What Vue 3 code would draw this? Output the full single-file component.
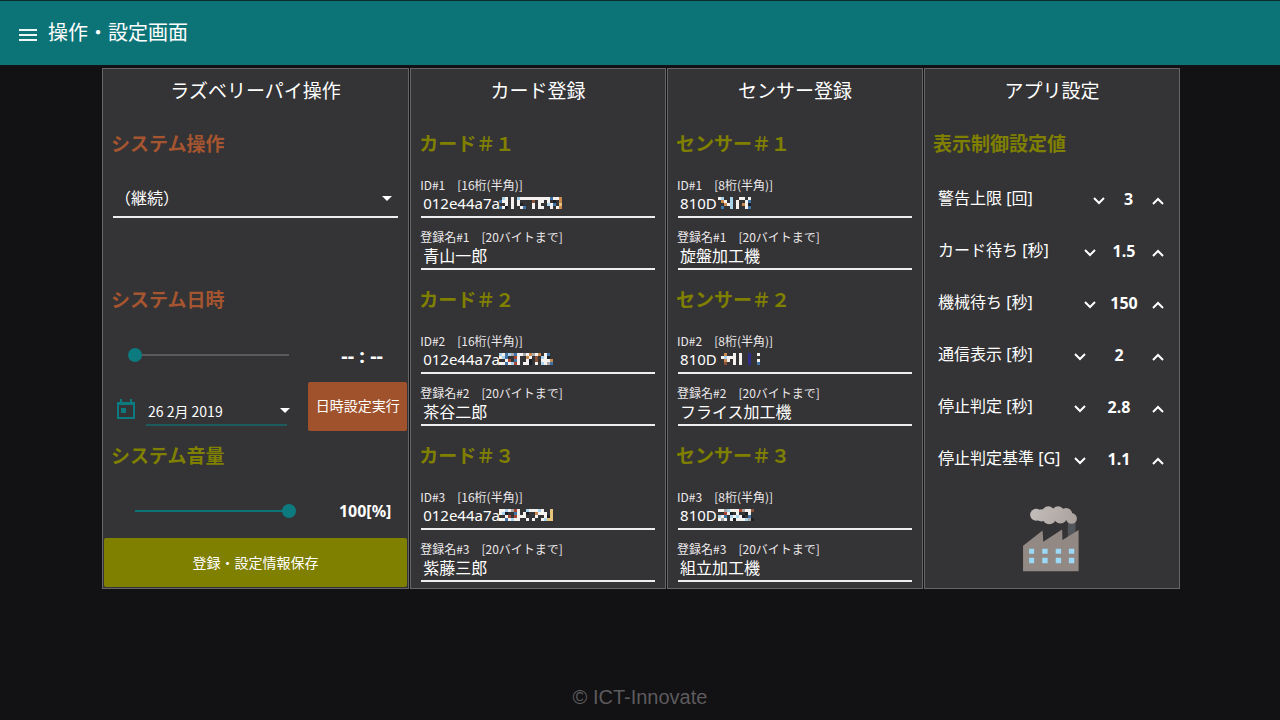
<script setup>
import { ref } from 'vue'

const operation = ref('（継続）')
const clock = ref(0)
const volume = ref(100)
const date = ref('26 2月 2019')

const palette = {
  W: '#f4f1ee', G: '#a9a7a8', c: '#a9d4ee', b: '#3f74a8', n: '#2f2c8a',
  o: '#c98a50', d: '#8a5236', y: '#e8c37c', r: '#a8442f', k: '#1b2026'
}

const cells = (rows) =>
  rows.flatMap((row, y) =>
    [...row].map((code, x) => ({ x: x * 3, y: y * 3, fill: palette[code] })).filter((c) => c.fill)
  )

const groups = ref([
  {
    key: 'card', title: 'カード登録', name: 'カード', digits: 16,
    items: [
      { no: '１', id: '012e44a7a', owner: '青山一郎', mask: [
        '.cW.W.cWWWWWWWWWWbWWo',
        'bWW.W.W....d.WW.W.k.o',
        '..W.W.Wk...W.W..cWb.y',
        'bWk.W..Wb..W.WW..W.Wo'
      ] },
      { no: '２', id: '012e44a7a', owner: '茶谷二郎', mask: [
        'cWbcGbWWGWoGWo.Wb.',
        'Wcb..rW..oW.d.cWk.',
        '..Wr.bW..Wk.d.WWWo',
        'WWbWcrW.WWk.W.cWGb'
      ] },
      { no: '３', id: '012e44a7a', owner: '紫藤三郎', mask: [
        'WWcWGrW..cWWWcW..y',
        'Wck..bW.Wk..oWWW.y',
        '..Wr.rWWW...W..Wky',
        'WWbWcWW..W.W..Wcyy'
      ] }
    ]
  },
  {
    key: 'sensor', title: 'センサー登録', name: 'センサー', digits: 8,
    items: [
      { no: '１', id: '810D', owner: '旋盤加工機', mask: [
        'Wc..c..WW.W',
        '.oW.c.W..Wb',
        '..oWc.W.oWk',
        '.b..c.W..Wb'
      ] },
      { no: '２', id: '810D', owner: 'フライス加工機', mask: [
        '..o..W.W..n..W',
        '.WcWWW.W..n...',
        '..oW.W.W..n..W',
        '..d..W.W..n..b'
      ] },
      { no: '３', id: '810D', owner: '組立加工機', mask: [
        'WWGcWWWrGWWd',
        '..rWk.W..kW.',
        'cWb.cWcWk.b.',
        'WGW.WkWWWcGk'
      ] }
    ]
  }
])

const settings = ref([
  { key: 'warn', label: '警告上限 [回]', value: '3', size: 'small', step: 1 },
  { key: 'card', label: 'カード待ち [秒]', value: '1.5', size: 'medium', step: 0.1 },
  { key: 'machine', label: '機械待ち [秒]', value: '150', size: 'medium', step: 1 },
  { key: 'comm', label: '通信表示 [秒]', value: '2', size: 'large', step: 1 },
  { key: 'stop', label: '停止判定 [秒]', value: '2.8', size: 'large', step: 0.1 },
  { key: 'base', label: '停止判定基準 [G]', value: '1.1', size: 'large', step: 0.1 }
])

function change(item, sign) {
  const next = Number(item.value) + sign * item.step
  item.value = next.toFixed(item.step < 1 ? 1 : 0)
}
</script>

<template>
  <div class="page">
    <header class="bar">
      <button class="menu" type="button" aria-label="メニュー">
        <svg width="18" height="14" viewBox="0 0 18 14"><path d="M0 2h18M0 7h18M0 12h18" stroke="#eef6f6" stroke-width="2" /></svg>
      </button>
      <h1>操作・設定画面</h1>
    </header>

    <main class="panels">
      <section class="panel">
        <h2>ラズベリーパイ操作</h2>
        <h3 class="danger">システム操作</h3>
        <div class="row operation">
          <select v-model="operation" aria-label="システム操作">
            <option>（継続）</option>
            <option>再起動</option>
            <option>終了</option>
          </select>
          <svg class="caret" width="10" height="5" viewBox="0 0 10 5"><path d="M0 0h10L5 5z" fill="#fff" /></svg>
        </div>
        <div class="row"></div>
        <h3 class="danger">システム日時</h3>
        <div class="row slide">
          <input v-model="clock" class="range" type="range" min="0" max="100" aria-label="時刻" />
          <output class="reading clock">-- : --</output>
        </div>
        <div class="row date">
          <svg class="calendar" width="18" height="20" viewBox="0 0 18 20">
            <path d="M1 4h16v15H1z" fill="none" stroke="#0c7a7e" stroke-width="2" />
            <path d="M0 3h18v3H0zM3 0h2v4H3zM13 0h2v4h-2zM4 9h5v5H4z" fill="#0c7a7e" />
          </svg>
          <div class="day">
            <select v-model="date" aria-label="日付">
              <option>26 2月 2019</option>
            </select>
            <svg class="caret" width="10" height="5" viewBox="0 0 10 5"><path d="M0 0h10L5 5z" fill="#fff" /></svg>
          </div>
          <button class="apply" type="button">日時設定実行</button>
        </div>
        <h3>システム音量</h3>
        <div class="row slide">
          <input v-model="volume" class="range high" type="range" min="0" max="100" aria-label="音量" />
          <output class="reading">{{ volume }}[%]</output>
        </div>
        <div class="row save-row">
          <button class="save" type="button">登録・設定情報保存</button>
        </div>
      </section>

      <section v-for="group in groups" :key="group.key" class="panel">
        <h2>{{ group.title }}</h2>
        <template v-for="(item, i) in group.items" :key="item.no">
          <h3>{{ group.name }}＃{{ item.no }}</h3>
          <div class="row field">
            <label :for="group.key + 'id' + i">ID#{{ i + 1 }}　[{{ group.digits }}桁(半角)]</label>
            <input :id="group.key + 'id' + i" v-model="item.id" class="code" type="text" />
            <svg class="mask" :class="group.key" :width="item.mask[0].length * 3" height="12">
              <rect v-for="(c, n) in cells(item.mask)" :key="n" :x="c.x" :y="c.y" width="3" height="3" :fill="c.fill" />
            </svg>
          </div>
          <div class="row field">
            <label :for="group.key + 'name' + i">登録名#{{ i + 1 }}　[20バイトまで]</label>
            <input :id="group.key + 'name' + i" v-model="item.owner" type="text" />
          </div>
        </template>
      </section>

      <section class="panel">
        <h2>アプリ設定</h2>
        <h3>表示制御設定値</h3>
        <div v-for="s in settings" :key="s.key" class="row setting">
          <label :for="s.key">{{ s.label }}</label>
          <div class="spinner" :class="s.size">
            <button type="button" :aria-label="s.label + ' 減'" @click="change(s, -1)">
              <svg width="12" height="8" viewBox="0 0 12 8"><path d="M1 1l5 5 5-5" fill="none" stroke="#fff" stroke-width="2" /></svg>
            </button>
            <input :id="s.key" v-model="s.value" type="text" />
            <button type="button" :aria-label="s.label + ' 増'" @click="change(s, 1)">
              <svg width="12" height="8" viewBox="0 0 12 8"><path d="M1 7l5-5 5 5" fill="none" stroke="#fff" stroke-width="2" /></svg>
            </button>
          </div>
        </div>
        <div class="factory">
          <svg width="56" height="66" viewBox="0 0 166 196">
            <defs>
              <linearGradient id="smoke" gradientUnits="userSpaceOnUse" x1="20" y1="0" x2="160" y2="50">
                <stop offset="0" stop-color="#c3bebc" />
                <stop offset="1" stop-color="#aaa19c" />
              </linearGradient>
            </defs>
            <path d="M133 46h23v50h-23z" fill="#52555a" />
            <path d="M0 118L58 73l2 33 56-36 1 31 48-30v123H0z" fill="#928984" />
            <g fill="url(#smoke)">
              <circle cx="39" cy="26" r="18" />
              <circle cx="55" cy="28" r="18" />
              <circle cx="75" cy="20" r="19" />
              <circle cx="78" cy="34" r="20" />
              <circle cx="104" cy="20" r="19" />
              <circle cx="111" cy="32" r="20" />
              <circle cx="128" cy="24" r="18" />
              <circle cx="144" cy="37" r="16" />
            </g>
            <path d="M18 127h15v15H18zM57 127h16v15H57zM97 127h16v15H97zM136 127h16v15h-16zM18 154h15v16H18zM57 154h16v16H57zM97 154h16v16H97zM136 154h16v16h-16z" fill="#9bd8f5" />
          </svg>
        </div>
      </section>
    </main>

    <footer>© ICT-Innovate</footer>
  </div>
</template>

<style>
body {
  background: #121113;
}
</style>

<style scoped>
.page {
  display: flex;
  flex-direction: column;
  min-height: 100vh;
  background: #121113;
  color: #fff;
  font-family: "Noto Sans", "Noto Sans CJK JP", sans-serif;
  font-size: 16px;
}
.page *,
.page {
  box-sizing: border-box;
}
h1,
h2,
h3 {
  margin: 0;
  font-family: "Noto Sans CJK JP", sans-serif;
}
button,
input,
select {
  margin: 0;
  padding: 0;
  border: 0;
  border-radius: 0;
  background: none;
  color: inherit;
  font: inherit;
  outline: none;
}
button {
  cursor: pointer;
}
.bar {
  display: flex;
  align-items: center;
  gap: 11px;
  height: 65px;
  padding-left: 19px;
  border-top: 1px solid #0a2a2c;
  background: #0c7377;
}
.menu {
  display: flex;
  padding-top: 4px;
}
h1 {
  padding-bottom: 2px;
  font-size: 20px;
  font-weight: 400;
  line-height: 28px;
}
.panels {
  display: grid;
  grid-template-columns: 6fr 5fr 5fr 5fr;
  gap: 1px;
  padding: 3px 100px 0 102px;
}
.panel {
  display: grid;
  grid-template-rows: repeat(9, 52px) 51px;
  min-width: 0;
  border: 1px solid #666567;
  background: #343335;
}
h2 {
  font-size: 19px;
  font-weight: 400;
  line-height: 42px;
  text-align: center;
}
h3 {
  padding-left: 8px;
  color: #808000;
  font-size: 19px;
  font-weight: 700;
  line-height: 44px;
}
h3.danger {
  color: #a5552f;
}
.row {
  position: relative;
  min-width: 0;
}
select {
  appearance: none;
  width: 100%;
}
option {
  background: #343335;
}
.operation {
  padding: 5px 10px 7px;
}
.operation select {
  height: 40px;
  padding-left: 2px;
  border-bottom: 2px solid #f0edef;
  font-family: "Noto Sans CJK JP", sans-serif;
}
.caret {
  position: absolute;
  pointer-events: none;
}
.operation .caret {
  top: 23px;
  right: 16px;
}
.slide {
  display: grid;
  grid-template-columns: 1fr 86px;
  align-items: center;
  padding-left: 25px;
}
.range {
  appearance: none;
  width: 168px;
  height: 16px;
}
.range::-webkit-slider-runnable-track {
  height: 2px;
  background: linear-gradient(#5a595b, #5a595b) center / calc(100% - 14px) 2px no-repeat;
}
.range.high::-webkit-slider-runnable-track {
  background-image: linear-gradient(#0c7377, #0c7377);
}
.range::-webkit-slider-thumb {
  appearance: none;
  width: 14px;
  height: 14px;
  margin-top: -6px;
  border-radius: 50%;
  background: #0c7a7e;
}
.reading {
  font-weight: 700;
  text-align: center;
}
.reading.clock {
  padding-right: 6px;
  font-size: 20px;
  white-space: nowrap;
}
.date {
  display: grid;
  grid-template-columns: 18px 1fr 99px;
  align-items: center;
  padding: 0 1px 2px 14px;
}
.calendar {
  margin-top: 6px;
}
.day {
  position: relative;
  align-self: end;
  height: 30px;
  margin: 0 21px 5px 11px;
  border-bottom: 2px solid #1d5c5d;
}
.day select {
  height: 30px;
  padding-left: 2px;
  font-family: "Noto Sans CJK JP", sans-serif;
  font-size: 14px;
}
.day .caret {
  top: 12px;
  right: -3px;
}
.apply,
.save {
  height: 49px;
  padding-bottom: 2px;
  border-radius: 2px;
  font-family: "Noto Sans CJK JP", sans-serif;
  font-size: 14px;
}
.apply {
  background: #a0522d;
}
.save-row {
  padding: 1px;
}
.save {
  width: 100%;
  background: #808000;
}
.field {
  display: flex;
  flex-direction: column;
  padding: 4px 10px 7px 9px;
}
.field label {
  height: 15px;
  color: #eceaec;
  font-family: "Noto Sans CJK JP", sans-serif;
  font-size: 12px;
  line-height: 16px;
  white-space: nowrap;
}
.field input {
  height: 26px;
  margin-left: 1px;
  padding: 0 0 2px 2px;
  border-bottom: 2px solid #f0edef;
}
.field input.code {
  font-size: 15px;
}
.mask {
  position: absolute;
  top: 24px;
}
.mask.card {
  left: 88px;
}
.mask.sensor {
  left: 50px;
}
.setting {
  display: flex;
  align-items: center;
  justify-content: space-between;
  padding: 0 13px;
}
.setting label {
  padding-bottom: 4px;
  white-space: nowrap;
}
.spinner {
  display: flex;
  align-items: center;
  flex: none;
  width: 94px;
}
.spinner.small {
  width: 75px;
}
.spinner.medium {
  width: 84px;
}
.spinner button {
  display: flex;
  align-items: center;
  justify-content: center;
  flex: none;
  width: 16px;
  height: 30px;
  padding-top: 3px;
}
.spinner input {
  min-width: 0;
  width: 100%;
  font-weight: 700;
  text-align: center;
}
.factory {
  grid-row: 9 / 11;
  display: flex;
  align-items: flex-start;
  justify-content: center;
  padding: 21px 3px 0 0;
}
footer {
  margin-top: auto;
  padding-bottom: 11px;
  color: #5d5b5e;
  font-family: "Liberation Sans", Arial, sans-serif;
  font-size: 20px;
  line-height: 24px;
  text-align: center;
}
</style>
